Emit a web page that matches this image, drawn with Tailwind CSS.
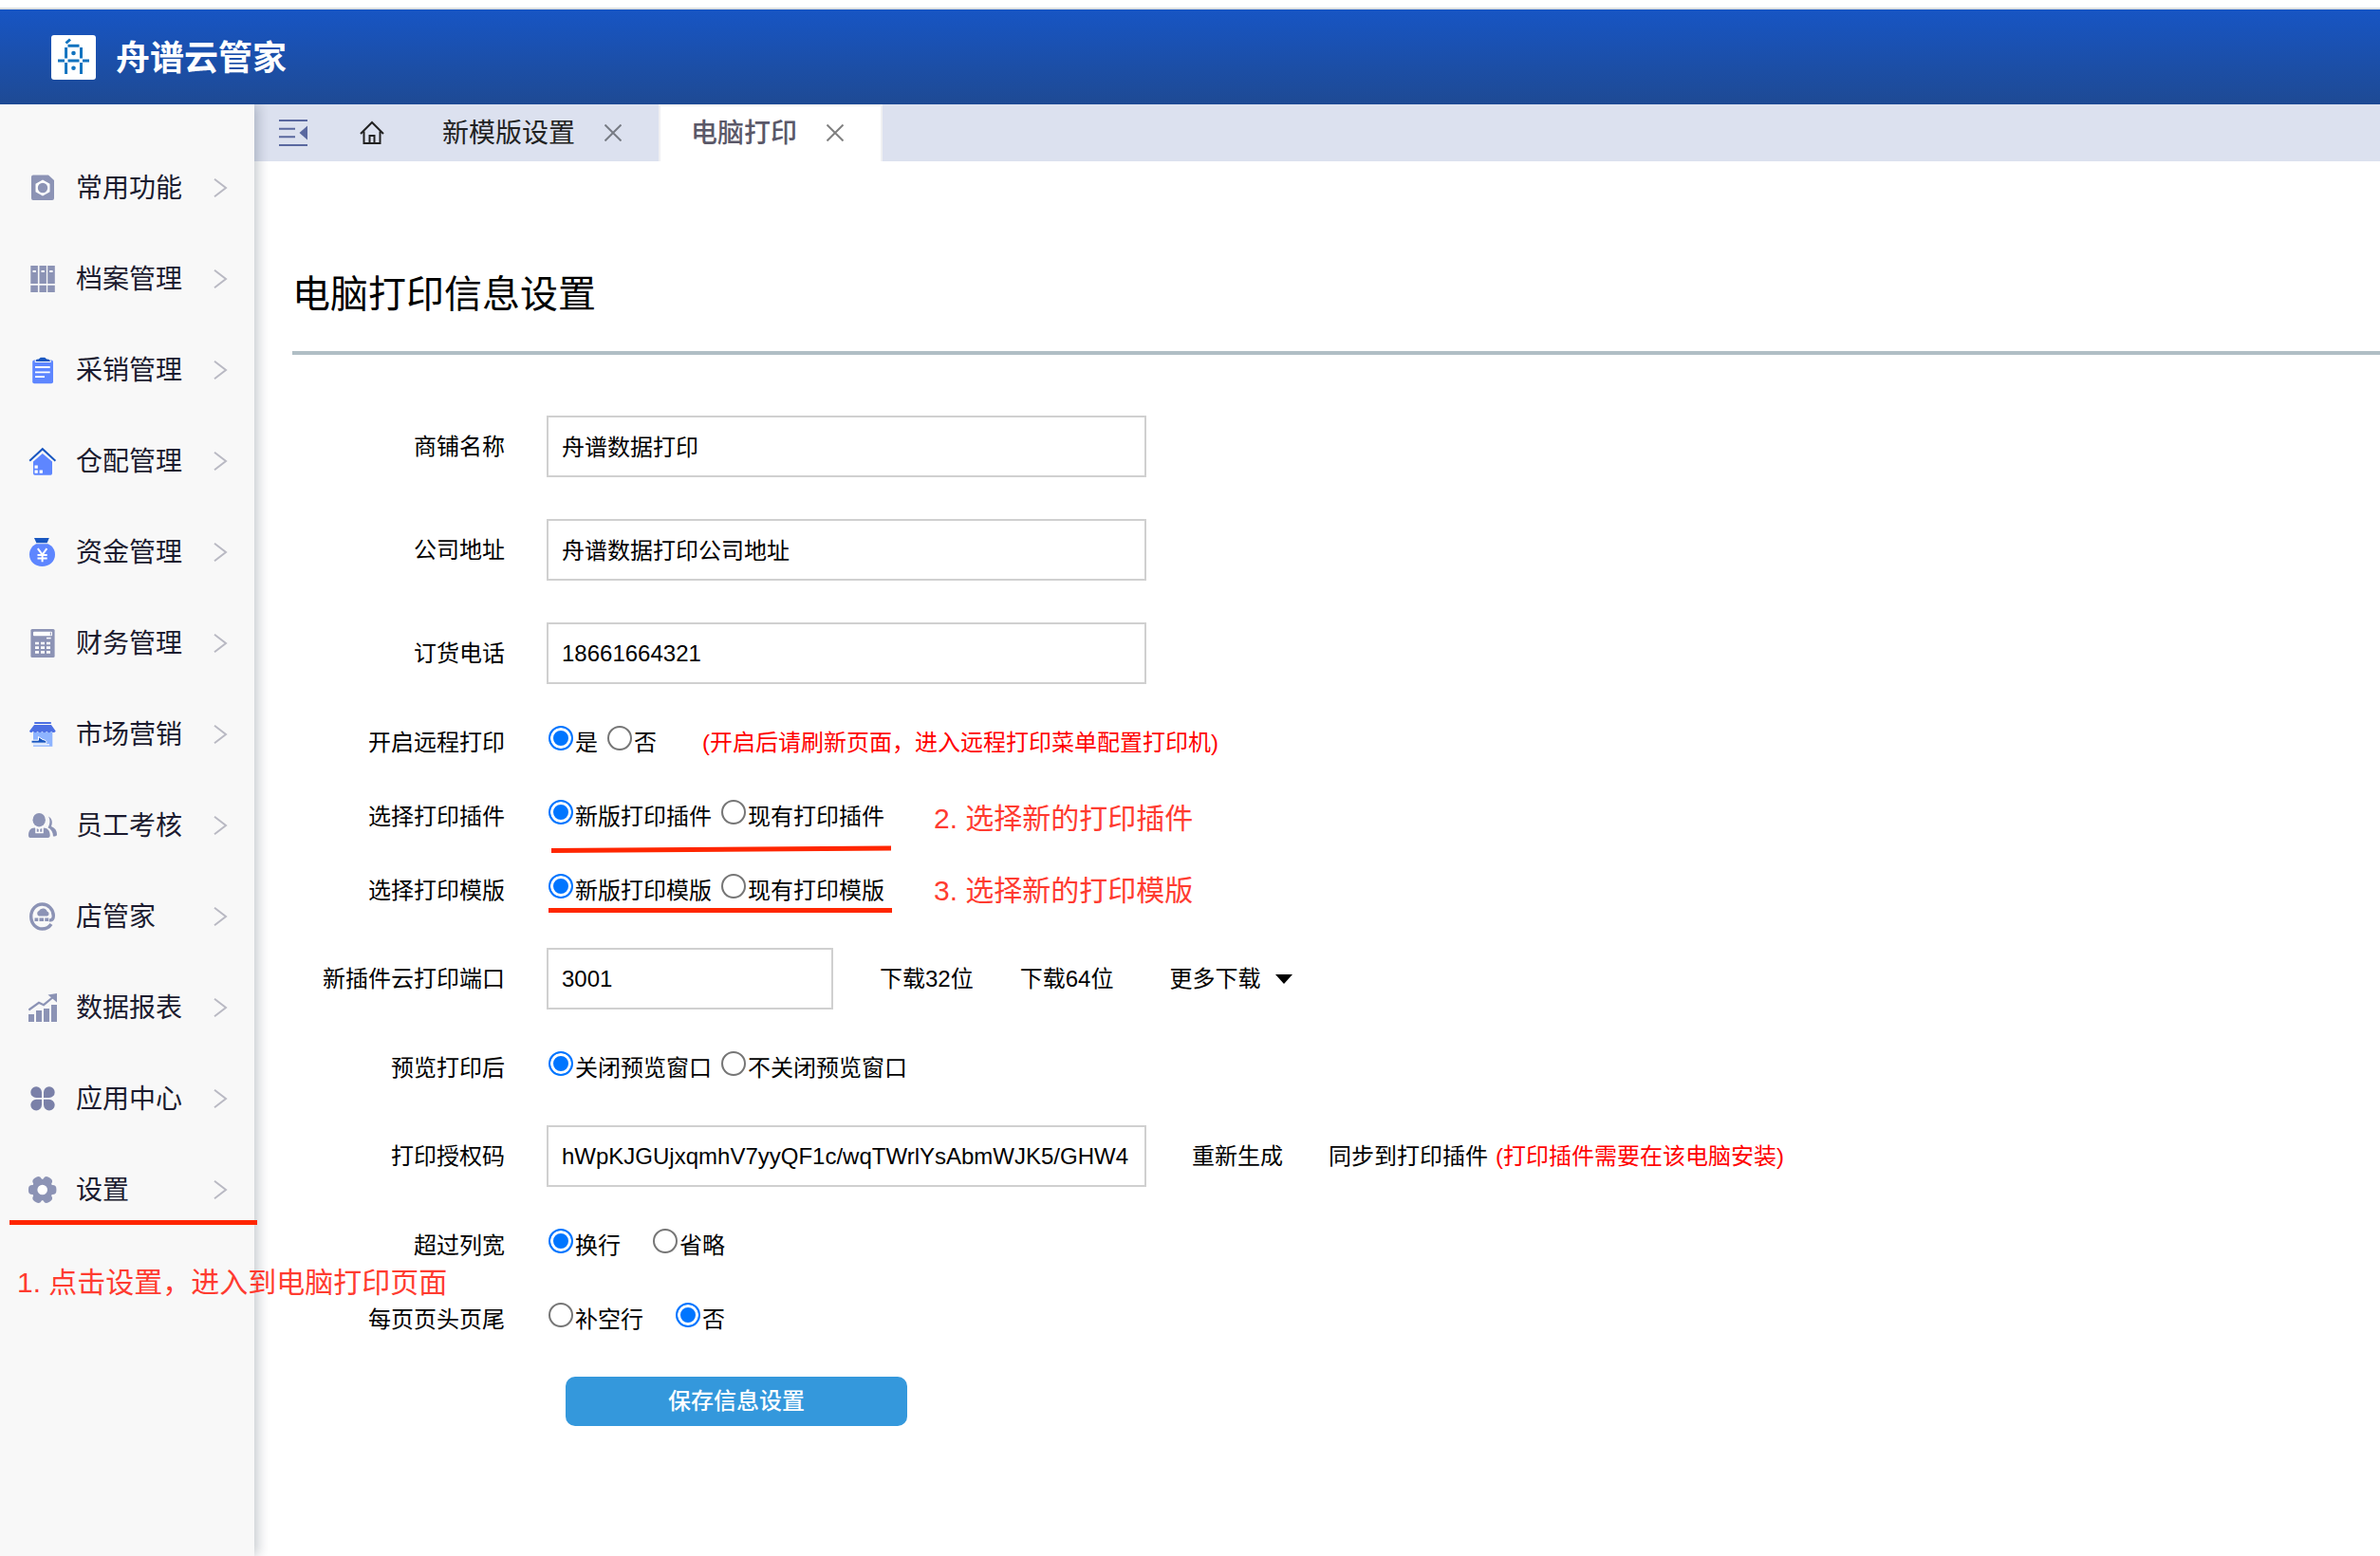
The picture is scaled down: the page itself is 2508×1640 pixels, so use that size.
<!DOCTYPE html>
<html lang="zh-CN">
<head>
<meta charset="utf-8">
<meta name="viewport" content="width=device-width, initial-scale=1">
<title>舟谱云管家 - 电脑打印</title>
<script src="https://cdn.jsdelivr.net/npm/@tailwindcss/browser@4"></script>
</head>
<body class="relative flex min-h-screen flex-col bg-white font-['Liberation_Sans','Noto_Sans_CJK_SC',sans-serif] text-2xl text-black">

<header class="relative z-20 mt-2 flex h-[102px] shrink-0 items-center gap-5 border-t-2 border-[#dcdfe0] bg-linear-to-b from-[#1755c4] to-[#1e4a94] pl-[54px]">
  <svg class="size-[47px]" viewBox="0 0 47 47" fill="none" stroke="#1173bf" stroke-width="3" aria-hidden="true">
    <rect width="47" height="47" rx="3" fill="#fff" stroke="none"/>
    <path d="M15.500 8.500 20 4.500M17.500 11.300h12M15.600 13v11.500M31.500 13v11.500M15.600 29v12M31.500 29v12M7 27h7M17.500 27h12M33 27h7"/>
    <circle cx="23.500" cy="19" r="2.300" fill="#1173bf" stroke="none"/><circle cx="23.500" cy="34.700" r="2.300" fill="#1173bf" stroke="none"/>
  </svg>
  <span class="pt-1 pl-px text-4xl font-bold text-white">舟谱云管家</span>
</header>

<div class="flex grow">
  <nav class="relative z-10 w-[268px] shrink-0 bg-[#f8f8f8] pt-10 text-[28px] text-[#1b1b2f] shadow-[4px_0_12px_rgba(0,21,41,0.22)]" aria-label="主菜单">
    <ul>
      <li><a href="#" class="flex h-24 items-center pr-7 pl-[30px]">
        <svg class="mr-5 size-[30px]" viewBox="0 0 30 30" fill="#8c93b5"><path d="M5 1.500h16l6 5.500v19a2 2 0 0 1-2 2H5a2 2 0 0 1-2-2v-22.500a2 2 0 0 1 2-2z"/><path fill="#fff" d="M15 6.500l7.500 4.300v8.400L15 23.500l-7.500-4.300v-8.400z"/><circle cx="15" cy="15" r="5.200"/></svg>
        <span class="grow pt-0.5">常用功能</span>
        <svg class="h-5 w-4" viewBox="0 0 16 20" fill="none" stroke="#b9b9c3" stroke-width="2"><path d="M2 .8 14 10 2 19.200"/></svg></a></li>
      <li><a href="#" class="flex h-24 items-center pr-7 pl-[30px]">
        <svg class="mr-5 size-[30px]" viewBox="0 0 30 30" fill="#8c93b5"><path d="M2.300 1h7.600v19H2.300zM11.500 1h7.400v19h-7.400zM20.200 1h7.600v19h-7.600zM2.300 21.800h7.600V29H2.300zM11.500 21.800h7.400V29h-7.400zM20.200 21.800h7.600V29h-7.600z"/><path stroke="#fff" stroke-width="2" d="M4.500 7h3.400M13.500 7h3.400M22.200 7h3.400"/></svg>
        <span class="grow pt-0.5">档案管理</span>
        <svg class="h-5 w-4" viewBox="0 0 16 20" fill="none" stroke="#b9b9c3" stroke-width="2"><path d="M2 .8 14 10 2 19.200"/></svg></a></li>
      <li><a href="#" class="flex h-24 items-center pr-7 pl-[30px]">
        <svg class="mr-5 size-[30px]" viewBox="0 0 30 30"><rect x="4.200" y="4.500" width="21.800" height="24.800" rx="2" fill="#5e86ff"/><path fill="#1856c0" stroke="#f8f8f8" d="M7 6.500c0-3 2-3.500 4-3.500 1-2.400 7-2.400 8 0 2 0 4.500.500 4.500 3.500z"/><path stroke="#fff" stroke-width="1.800" d="M7 12h15.700M7 17.300h15.700M7 22.200h10"/></svg>
        <span class="grow pt-0.5">采销管理</span>
        <svg class="h-5 w-4" viewBox="0 0 16 20" fill="none" stroke="#b9b9c3" stroke-width="2"><path d="M2 .8 14 10 2 19.200"/></svg></a></li>
      <li><a href="#" class="flex h-24 items-center pr-7 pl-[30px]">
        <svg class="mr-5 size-[30px]" viewBox="0 0 30 30"><path fill="#5e86ff" d="M14.800 7 25 15.500V28a1.700 1.700 0 0 1-1.700 1.700H6.700A1.700 1.700 0 0 1 5 28V15.500z"/><path fill="none" stroke="#1856c0" stroke-width="2" d="M1.200 14.700 14.800 2.200l13.600 12.500"/><path fill="#fff" d="M6.500 19.500h3.300v3.300H6.500zM6.500 24.500h3.300v3.300H6.500zM11.600 24.500h3.300v3.300h-3.300z"/></svg>
        <span class="grow pt-0.5">仓配管理</span>
        <svg class="h-5 w-4" viewBox="0 0 16 20" fill="none" stroke="#b9b9c3" stroke-width="2"><path d="M2 .8 14 10 2 19.200"/></svg></a></li>
      <li><a href="#" class="flex h-24 items-center pr-7 pl-[30px]">
        <svg class="mr-5 size-[30px]" viewBox="0 0 30 30"><path fill="#5e86ff" d="M8 6.300h12.600C25.500 8.500 28 13 28 17.500 28 25 22 30 14.400 30S1 25 1 17.500C1 13 3.500 8.500 8 6.300z"/><path fill="#1856c0" d="M6 0h15.800L19.600 5.300H8.400z"/><path fill="none" stroke="#fff" stroke-width="2" d="M9.800 11.200l4.800 6.300 4.800-6.300M14.600 17v8.300M9.500 18h10.200M9.500 21.500h10.200"/></svg>
        <span class="grow pt-0.5">资金管理</span>
        <svg class="h-5 w-4" viewBox="0 0 16 20" fill="none" stroke="#b9b9c3" stroke-width="2"><path d="M2 .8 14 10 2 19.200"/></svg></a></li>
      <li><a href="#" class="flex h-24 items-center pr-7 pl-[30px]">
        <svg class="mr-5 size-[30px]" viewBox="0 0 30 30"><rect x="2.400" width="25.200" height="30" rx="1.500" fill="#8c93b5"/><rect x="5" y="2.700" width="20" height="4.500" rx="1" fill="#fff"/><path stroke="#8c93b5" d="M23.300 3.500v3"/><path stroke="#fff" stroke-width="1.500" d="M19 9.600h4.700"/><path stroke="#fff" stroke-width="2.700" stroke-dasharray="4 2" d="M7 15h16.500M7 19.700h16.500M7 24.400h16.500"/></svg>
        <span class="grow pt-0.5">财务管理</span>
        <svg class="h-5 w-4" viewBox="0 0 16 20" fill="none" stroke="#b9b9c3" stroke-width="2"><path d="M2 .8 14 10 2 19.200"/></svg></a></li>
      <li><a href="#" class="flex h-24 items-center pr-7 pl-[30px]">
        <svg class="mr-5 size-[30px]" viewBox="0 0 30 30"><path fill="#8eb4ff" d="M5 12.500h20.300v15.300H5z"/><path fill="#4c6fe3" d="M6.300 2h17.500v2H6.300zM6 5h18l4.700 6.500c-1 2-3.500 2-4.500.300-1.200 1.900-3.800 1.900-5 0-1.200 1.900-3.600 1.900-4.800 0-1.200 1.900-3.600 1.900-4.800 0-1.200 1.900-3.600 1.900-4.800 0-1 1.700-3 1.700-3.800-.3z"/><path fill="#1856c0" stroke="#fff" d="M3 21.200h7.500V17.500l4.500 3c3 .5 4.300 1.500 4 3.700H3z"/><path stroke="#fff" stroke-width="1.200" d="M5 25.800h17"/></svg>
        <span class="grow pt-0.5">市场营销</span>
        <svg class="h-5 w-4" viewBox="0 0 16 20" fill="none" stroke="#b9b9c3" stroke-width="2"><path d="M2 .8 14 10 2 19.200"/></svg></a></li>
      <li><a href="#" class="flex h-24 items-center pr-7 pl-[30px]">
        <svg class="mr-5 size-[30px]" viewBox="0 0 30 30" fill="#8c93b5"><ellipse cx="11.200" cy="9.200" rx="6.700" ry="7.300"/><path d="M6.500 17.500C2 17.500 0 21 0 25.500 0 27.500 1 28 2.500 28h18c1.500 0 2.200-1 2.200-2.500 0-5-2.500-8-7-8l-4.300 1.800z"/><path d="M21 5.500c3.500 1.500 5 6 3 10.500 4 1.500 6 4.500 6 8.500 0 1.500-1 2-4 2 0-4-2-7.500-5.500-9.200C23 13.500 23 9 21 5.500z"/><path fill="none" stroke="#fff" stroke-width="1.500" d="M8 16.800v5.700h7v-5.700M11.500 19v3"/></svg>
        <span class="grow pt-0.5">员工考核</span>
        <svg class="h-5 w-4" viewBox="0 0 16 20" fill="none" stroke="#b9b9c3" stroke-width="2"><path d="M2 .8 14 10 2 19.200"/></svg></a></li>
      <li><a href="#" class="flex h-24 items-center pr-7 pl-[30px]">
        <svg class="mr-5 size-[30px]" viewBox="0 0 30 30" fill="#8c93b5"><path fill="none" stroke="#8c93b5" stroke-width="3.400" d="M22 18.800c3 .5 4.300-1.500 4.300-4.500C26.300 7.500 21 2 14.500 2 8 2 2.700 7.500 2.700 15S8 28 14.500 28c4.300 0 7.500-2 9.500-5"/><path d="M11 14.500a3 3 0 0 1 0-5.500 4.800 4.800 0 0 1 8.800.8 2.500 2.500 0 0 1 .2 4.700zM6.500 16.500h3.700V20H6.500zM11.500 16.500H16V20h-4.500zM17.300 16.500h4V20h-4z"/></svg>
        <span class="grow pt-0.5">店管家</span>
        <svg class="h-5 w-4" viewBox="0 0 16 20" fill="none" stroke="#b9b9c3" stroke-width="2"><path d="M2 .8 14 10 2 19.200"/></svg></a></li>
      <li><a href="#" class="flex h-24 items-center pr-7 pl-[30px]">
        <svg class="mr-5 size-[30px]" viewBox="0 0 30 30" fill="#8c93b5"><path d="M0 22h6v8H0zM8 18h6v12H8zM16 16h6v14h-6zM24 12h6v18h-6zM20.500 1.500 30 0v9.500z"/><path fill="none" stroke="#8c93b5" stroke-width="2.200" d="M.3 17.500 11 9.800l5 2.400L27 3"/></svg>
        <span class="grow pt-0.5">数据报表</span>
        <svg class="h-5 w-4" viewBox="0 0 16 20" fill="none" stroke="#b9b9c3" stroke-width="2"><path d="M2 .8 14 10 2 19.200"/></svg></a></li>
      <li><a href="#" class="flex h-24 items-center pr-7 pl-[30px]">
        <svg class="mr-5 size-[30px]" viewBox="0 0 30 30" fill="#7a80a8"><path d="M14 14H8.200A5.850 5.850 0 1 1 14 8.200zM16 14h5.800A5.850 5.850 0 1 0 16 8.200zM14 15.700H8.200A5.850 5.850 0 1 0 14 21.500zM16 15.700h5.800A5.850 5.850 0 1 1 16 21.500z"/></svg>
        <span class="grow pt-0.5">应用中心</span>
        <svg class="h-5 w-4" viewBox="0 0 16 20" fill="none" stroke="#b9b9c3" stroke-width="2"><path d="M2 .8 14 10 2 19.200"/></svg></a></li>
      <li><a href="#" class="flex h-24 items-center pr-7 pl-[30px]">
        <svg class="mr-5 size-[30px]" viewBox="0 0 30 30"><g fill="#8c93b5"><circle cx="14.700" cy="15" r="11.300"/><rect x="0" y="10" width="29.400" height="10" rx="4"/><rect x="0" y="10" width="29.400" height="10" rx="4" transform="rotate(60 14.700 15)"/><rect x="0" y="10" width="29.400" height="10" rx="4" transform="rotate(120 14.700 15)"/></g><circle cx="14.700" cy="15" r="5.300" fill="#fff"/></svg>
        <span class="grow pt-0.5">设置</span>
        <svg class="h-5 w-4" viewBox="0 0 16 20" fill="none" stroke="#b9b9c3" stroke-width="2"><path d="M2 .8 14 10 2 19.200"/></svg></a></li>
    </ul>
  </nav>

  <div class="min-w-0 grow">
    <div class="flex h-[60px] items-center bg-[#dce1ef] pl-[26px] text-[28px] text-[#222]">
      <button type="button" aria-label="收起菜单" class="mr-[55px]">
        <svg class="h-7 w-[30px]" viewBox="0 0 30 28" stroke="#5a689f" stroke-width="2" fill="#5a689f"><path d="M0 1h30M0 9.700h17M0 18.300h17M0 27h30"/><path stroke="none" d="M30 6.500v15L21.500 14z"/></svg>
      </button>
      <a href="#" aria-label="首页" class="mr-[61px]">
        <svg class="size-[26px]" viewBox="0 0 26 26" fill="none" stroke="#222" stroke-width="2"><path d="M1 14 13 2l12 12M4.500 11.500V24h17V11.500M10.500 24v-8h5v8"/></svg>
      </a>
      <div class="flex h-full items-center gap-[31px] pr-[39px]">
        <a href="#" class="pt-0.5">新模版设置</a>
        <button type="button" aria-label="关闭新模版设置"><svg class="size-[18px]" viewBox="0 0 18 18" stroke="#777b84" stroke-width="2"><path d="M.5.5l17 17M17.500.5l-17 17"/></svg></button>
      </div>
      <div class="flex h-full items-center gap-[31px] border-2 border-b-0 border-[#f0f0f2] bg-white pr-[39px] pl-8 font-medium text-[#5a5868]">
        <a href="#" aria-current="page">电脑打印</a>
        <button type="button" aria-label="关闭电脑打印" class="-mt-0.5"><svg class="size-[18px]" viewBox="0 0 18 18" stroke="#808080" stroke-width="2"><path d="M.5.5l17 17M17.500.5l-17 17"/></svg></button>
      </div>
    </div>

    <main class="pl-10">
      <h1 class="border-b-4 border-[#b0bec5] pt-[110px] pb-[30px] text-[40px] leading-[60px]">电脑打印信息设置</h1>

      <form class="flex flex-col gap-11 pt-16 pb-20">
        <div class="flex h-[65px] items-center gap-11">
          <label for="shop" class="w-56 shrink-0 text-right">商铺名称</label>
          <input id="shop" type="text" value="舟谱数据打印" class="h-full w-[632px] border-2 border-[#d0d0d0] px-3.5 pb-0.5">
        </div>
        <div class="flex h-[65px] items-center gap-11">
          <label for="addr" class="w-56 shrink-0 text-right">公司地址</label>
          <input id="addr" type="text" value="舟谱数据打印公司地址" class="h-full w-[632px] border-2 border-[#d0d0d0] px-3.5 pb-0.5">
        </div>
        <div class="flex h-[65px] items-center gap-11">
          <label for="tel" class="w-56 shrink-0 text-right">订货电话</label>
          <input id="tel" type="tel" value="18661664321" class="h-full w-[632px] border-2 border-[#d0d0d0] px-3.5">
        </div>

        <div role="radiogroup" aria-labelledby="l-remote" class="flex h-[34px] gap-[46px] leading-9">
          <span id="l-remote" class="w-56 shrink-0 text-right">开启远程打印</span>
          <div class="flex gap-2.5">
            <label class="flex gap-0.5"><input type="radio" name="remote" checked class="size-[26px] appearance-none rounded-full border-2 border-[#767676] checked:border-[#0075ff] checked:bg-[#0075ff] checked:shadow-[inset_0_0_0_3px_#fff]">是</label>
            <label class="flex gap-0.5"><input type="radio" name="remote" class="size-[26px] appearance-none rounded-full border-2 border-[#767676] checked:border-[#0075ff] checked:bg-[#0075ff] checked:shadow-[inset_0_0_0_3px_#fff]">否</label>
            <span class="ml-[38px] text-[#f00]">(开启后请刷新页面，进入远程打印菜单配置打印机)</span>
          </div>
        </div>
        <div role="radiogroup" aria-labelledby="l-plugin" class="flex h-[34px] gap-[46px] leading-9">
          <span id="l-plugin" class="w-56 shrink-0 text-right">选择打印插件</span>
          <div class="relative flex gap-2.5">
            <label class="flex gap-0.5"><input type="radio" name="plugin" checked class="size-[26px] appearance-none rounded-full border-2 border-[#767676] checked:border-[#0075ff] checked:bg-[#0075ff] checked:shadow-[inset_0_0_0_3px_#fff]">新版打印插件</label>
            <label class="flex gap-0.5"><input type="radio" name="plugin" class="size-[26px] appearance-none rounded-full border-2 border-[#767676] checked:border-[#0075ff] checked:bg-[#0075ff] checked:shadow-[inset_0_0_0_3px_#fff]">现有打印插件</label>
            <svg class="absolute top-12 left-0 h-2.5 w-[362px]" viewBox="0 0 362 10" stroke="#ff2600" stroke-width="5"><path d="M3 5.500 361 3"/></svg>
            <span class="absolute top-0 left-[406px] text-3xl leading-10 whitespace-nowrap text-[#ff3b30]">2. 选择新的打印插件</span>
          </div>
        </div>
        <div role="radiogroup" aria-labelledby="l-tpl" class="flex h-[34px] gap-[46px] leading-9">
          <span id="l-tpl" class="w-56 shrink-0 text-right">选择打印模版</span>
          <div class="relative flex gap-2.5">
            <label class="flex gap-0.5"><input type="radio" name="tpl" checked class="size-[26px] appearance-none rounded-full border-2 border-[#767676] checked:border-[#0075ff] checked:bg-[#0075ff] checked:shadow-[inset_0_0_0_3px_#fff]">新版打印模版</label>
            <label class="flex gap-0.5"><input type="radio" name="tpl" class="size-[26px] appearance-none rounded-full border-2 border-[#767676] checked:border-[#0075ff] checked:bg-[#0075ff] checked:shadow-[inset_0_0_0_3px_#fff]">现有打印模版</label>
            <span class="absolute top-9 left-0 h-[5px] w-[362px] bg-[#ff2600]"></span>
            <span class="absolute -top-0.5 left-[406px] text-3xl leading-10 whitespace-nowrap text-[#ff3b30]">3. 选择新的打印模版</span>
          </div>
        </div>

        <div class="flex h-[65px] items-center gap-11">
          <label for="port" class="w-56 shrink-0 text-right">新插件云打印端口</label>
          <div class="flex h-full items-center gap-[49px]">
            <input id="port" type="text" value="3001" class="h-full w-[302px] border-2 border-[#d0d0d0] px-3.5">
            <a href="#">下载32位</a>
            <a href="#">下载64位</a>
            <button type="button" aria-haspopup="menu" class="ml-2.5 flex items-center gap-4">更多下载
              <svg class="h-2.5 w-[18px]" viewBox="0 0 18 10"><path d="M0 0h18L9 10z"/></svg>
            </button>
          </div>
        </div>

        <div role="radiogroup" aria-labelledby="l-prev" class="flex h-[34px] gap-[46px] leading-9">
          <span id="l-prev" class="w-56 shrink-0 text-right">预览打印后</span>
          <div class="flex gap-2.5">
            <label class="flex gap-0.5"><input type="radio" name="prev" checked class="size-[26px] appearance-none rounded-full border-2 border-[#767676] checked:border-[#0075ff] checked:bg-[#0075ff] checked:shadow-[inset_0_0_0_3px_#fff]">关闭预览窗口</label>
            <label class="flex gap-0.5"><input type="radio" name="prev" class="size-[26px] appearance-none rounded-full border-2 border-[#767676] checked:border-[#0075ff] checked:bg-[#0075ff] checked:shadow-[inset_0_0_0_3px_#fff]">不关闭预览窗口</label>
          </div>
        </div>

        <div class="flex h-[65px] items-center gap-11">
          <label for="key" class="w-56 shrink-0 text-right">打印授权码</label>
          <div class="flex h-full items-center gap-12">
            <input id="key" type="text" value="hWpKJGUjxqmhV7yyQF1c/wqTWrlYsAbmWJK5/GHW4" class="h-full w-[632px] border-2 border-[#d0d0d0] px-3.5">
            <a href="#">重新生成</a>
            <span class="flex gap-2"><a href="#">同步到打印插件</a><span class="text-[#f00]">(打印插件需要在该电脑安装)</span></span>
          </div>
        </div>

        <div role="radiogroup" aria-labelledby="l-over" class="flex h-[34px] gap-[46px] leading-9">
          <span id="l-over" class="w-56 shrink-0 text-right">超过列宽</span>
          <div class="flex gap-[34px]">
            <label class="flex gap-0.5"><input type="radio" name="over" checked class="size-[26px] appearance-none rounded-full border-2 border-[#767676] checked:border-[#0075ff] checked:bg-[#0075ff] checked:shadow-[inset_0_0_0_3px_#fff]">换行</label>
            <label class="flex gap-0.5"><input type="radio" name="over" class="size-[26px] appearance-none rounded-full border-2 border-[#767676] checked:border-[#0075ff] checked:bg-[#0075ff] checked:shadow-[inset_0_0_0_3px_#fff]">省略</label>
          </div>
        </div>
        <div role="radiogroup" aria-labelledby="l-page" class="flex h-[34px] gap-[46px] leading-9">
          <span id="l-page" class="w-56 shrink-0 text-right">每页页头页尾</span>
          <div class="flex gap-[34px]">
            <label class="flex gap-0.5"><input type="radio" name="page" class="size-[26px] appearance-none rounded-full border-2 border-[#767676] checked:border-[#0075ff] checked:bg-[#0075ff] checked:shadow-[inset_0_0_0_3px_#fff]">补空行</label>
            <label class="flex gap-0.5"><input type="radio" name="page" checked class="size-[26px] appearance-none rounded-full border-2 border-[#767676] checked:border-[#0075ff] checked:bg-[#0075ff] checked:shadow-[inset_0_0_0_3px_#fff]">否</label>
          </div>
        </div>

        <button type="button" class="ml-72 h-[52px] w-[360px] rounded-[10px] bg-[#3498dc] font-medium text-white">保存信息设置</button>
      </form>
    </main>
  </div>
</div>

<!-- step 1 callout, drawn over the menu and the form -->
<div class="absolute top-[1286px] left-2.5 z-30 text-3xl text-[#ff3b30]">
  <div class="h-[5px] w-[261px] bg-[#ff2600]"></div>
  <p class="pt-[41px] pl-2 leading-10 whitespace-nowrap">1. 点击设置，进入到电脑打印页面</p>
</div>
</body>
</html>
